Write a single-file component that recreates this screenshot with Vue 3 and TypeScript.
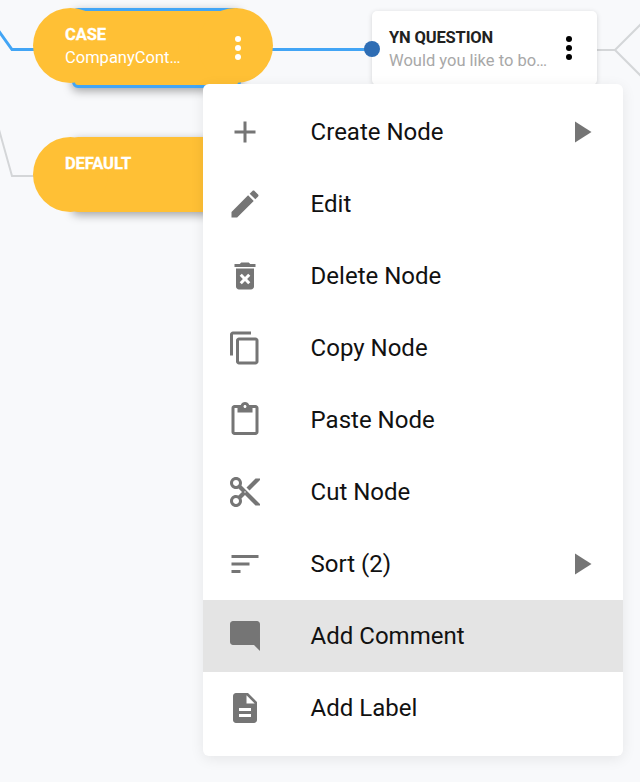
<template>
  <div class="canvas">
    <svg class="wires" width="640" height="782" viewBox="0 0 640 782">
      <polyline points="-2,30 12,49.5 40,49.5" class="wire active" />
      <polyline points="260,49.5 372,49.5" class="wire active" />
      <polyline points="-2,126 12,176 40,176" class="wire" />
      <polyline points="597,50 615,50 642,23" class="wire" />
      <polyline points="615,50 642,77" class="wire" />
    </svg>

    <div class="case-back selected"></div>
    <div class="case-node">
      <div class="case-text">
        <div class="case-title">CASE</div>
        <div class="case-sub">CompanyCont…</div>
      </div>
      <div class="dots light"><i></i><i></i><i></i></div>
    </div>

    <div class="case-back second"></div>
    <div class="case-node default">
      <div class="case-text">
        <div class="case-title">DEFAULT</div>
      </div>
    </div>

    <div class="question">
      <div class="question-text">
        <div class="question-title">YN QUESTION</div>
        <div class="question-sub">Would you like to bo…</div>
      </div>
      <div class="dots"><i></i><i></i><i></i></div>
    </div>
    <div class="port"></div>

    <ul class="menu">
      <li v-for="item in items" :key="item.label" class="menu-item" :class="{ hover: item.hover }">
        <svg class="icon" viewBox="0 0 24 24"><path :d="item.icon" /></svg>
        <span class="label">{{ item.label }}</span>
        <svg v-if="item.sub" class="icon arrow" viewBox="0 0 24 24"><path d="M8 5v14l11-7z" /></svg>
      </li>
    </ul>
  </div>
</template>

<script setup lang="ts">
interface MenuItem {
  label: string
  icon: string
  sub?: boolean
  hover?: boolean
}

const items: MenuItem[] = [
  { label: 'Create Node', sub: true, icon: 'M19 13h-6v6h-2v-6H5v-2h6V5h2v6h6v2z' },
  {
    label: 'Edit',
    icon: 'M3 17.25V21h3.75L17.81 9.94l-3.75-3.75L3 17.25zM20.71 7.04c.39-.39.39-1.02 0-1.41l-2.34-2.34c-.39-.39-1.02-.39-1.41 0l-1.83 1.83 3.75 3.75 1.83-1.83z'
  },
  {
    label: 'Delete Node',
    icon: 'M6 19c0 1.1.9 2 2 2h8c1.1 0 2-.9 2-2V7H6v12zm2.46-7.12l1.41-1.41L12 12.59l2.12-2.12 1.41 1.41L13.41 14l2.12 2.12-1.41 1.41L12 15.41l-2.12 2.12-1.41-1.41L10.59 14l-2.13-2.12zM15.5 4l-1-1h-5l-1 1H5v2h14V4z'
  },
  {
    label: 'Copy Node',
    icon: 'M16 1H4c-1.1 0-2 .9-2 2v14h2V3h12V1zm3 4H8c-1.1 0-2 .9-2 2v14c0 1.1.9 2 2 2h11c1.1 0 2-.9 2-2V7c0-1.1-.9-2-2-2zm0 16H8V7h11v14z'
  },
  {
    label: 'Paste Node',
    icon: 'M19 2h-4.18C14.4.84 13.3 0 12 0c-1.3 0-2.4.84-2.82 2H5c-1.1 0-2 .9-2 2v16c0 1.1.9 2 2 2h14c1.1 0 2-.9 2-2V4c0-1.1-.9-2-2-2zm-7 0c.55 0 1 .45 1 1s-.45 1-1 1-1-.45-1-1 .45-1 1-1zm7 18H5V4h2v3h10V4h2v16z'
  },
  {
    label: 'Cut Node',
    icon: 'M9.64 7.64c.23-.5.36-1.05.36-1.64 0-2.21-1.79-4-4-4S2 3.79 2 6s1.79 4 4 4c.59 0 1.14-.13 1.64-.36L10 12l-2.36 2.36C7.14 14.13 6.59 14 6 14c-2.21 0-4 1.79-4 4s1.79 4 4 4 4-1.79 4-4c0-.59-.13-1.14-.36-1.64L12 14l7 7h3v-1L9.64 7.64zM6 8c-1.1 0-2-.89-2-2s.9-2 2-2 2 .89 2 2-.9 2-2 2zm0 12c-1.1 0-2-.89-2-2s.9-2 2-2 2 .89 2 2-.9 2-2 2zm6-7.5c-.28 0-.5-.22-.5-.5s.22-.5.5-.5.5.22.5.5-.22.5-.5.5zM19 3l-6 6 2 2 7-7V3z'
  },
  { label: 'Sort (2)', sub: true, icon: 'M3 18h6v-2H3v2zM3 6v2h18V6H3zm0 7h12v-2H3v2z' },
  {
    label: 'Add Comment',
    hover: true,
    icon: 'M21.99 4c0-1.1-.89-2-1.99-2H4c-1.1 0-2 .9-2 2v12c0 1.1.9 2 2 2h14l4 4-.01-18z'
  },
  {
    label: 'Add Label',
    icon: 'M14 2H6c-1.1 0-1.99.9-1.99 2L4 20c0 1.1.89 2 1.99 2H18c1.1 0 2-.9 2-2V8l-6-6zm2 16H8v-2h8v2zm0-4H8v-2h8v2zm-3-5V3.5L18.5 9H13z'
  }
]
</script>

<style>
html,
body {
  margin: 0;
  background: #f8f9fb;
}
</style>

<style scoped>
.canvas {
  position: relative;
  width: 640px;
  height: 782px;
  overflow: hidden;
  background: #f8f9fb;
  font-family: Roboto, sans-serif;
}

.wires {
  position: absolute;
  left: 0;
  top: 0;
}

.wire {
  fill: none;
  stroke: #d4d6d8;
  stroke-width: 2;
}

.wire.active {
  stroke: #42a5f5;
  stroke-width: 3;
}

/* middle slab of the node, the round caps sit over it */
.case-back {
  position: absolute;
  left: 72px;
  top: 8px;
  width: 169px;
  height: 80px;
  box-sizing: border-box;
  border-radius: 6px;
  background: #ffc035;
  box-shadow: 0 3px 10px rgba(0, 0, 0, 0.35);
}

.case-back.selected {
  border: 3px solid #42a5f5;
}

.case-back.second {
  top: 137px;
  height: 75px;
}

.case-node {
  position: absolute;
  left: 33px;
  top: 8px;
  width: 240px;
  height: 75px;
  box-sizing: border-box;
  padding: 0 32px;
  color: #fff;
  display: flex;
  align-items: center;
  justify-content: space-between;
}

.case-node::before,
.case-node::after {
  content: '';
  position: absolute;
  top: 0;
  width: 75px;
  height: 75px;
  border-radius: 50%;
  background: #ffc035;
}

.case-node::before {
  left: 0;
}

.case-node::after {
  right: 0;
}

.case-node.default {
  top: 137px;
  align-items: flex-start;
}

.case-text,
.case-node .dots {
  position: relative;
  z-index: 1;
}

.default .case-text {
  padding-top: 15px;
}

.case-title {
  font-size: 16.5px;
  line-height: 23px;
  font-weight: 700;
  letter-spacing: -0.1px;
  -webkit-text-stroke: 0.3px #fff;
}

.case-sub {
  font-size: 16.5px;
  line-height: 23px;
}

.case-node .dots {
  margin-top: 5px;
}

.dots {
  display: flex;
  flex-direction: column;
  gap: 3px;
  width: 6px;
}

.dots i {
  width: 6px;
  height: 6px;
  border-radius: 50%;
  background: #000;
}

.dots.light i {
  background: #fff;
}

.question {
  position: absolute;
  left: 372px;
  top: 11px;
  width: 225px;
  height: 74px;
  box-sizing: border-box;
  padding: 0 25px 0 17px;
  border-radius: 5px;
  background: #fff;
  box-shadow: 0 1px 5px rgba(0, 0, 0, 0.15);
  display: flex;
  align-items: center;
  justify-content: space-between;
}

.question-text {
  padding-top: 2px;
}

.question-title {
  font-size: 16.5px;
  line-height: 23px;
  font-weight: 700;
  letter-spacing: -0.15px;
  color: #212121;
}

.question-sub {
  font-size: 16.5px;
  line-height: 23px;
  color: #a8a8a8;
}

.port {
  position: absolute;
  left: 364px;
  top: 41px;
  width: 16px;
  height: 16px;
  border-radius: 50%;
  background: #2e6db4;
}

.menu {
  position: absolute;
  left: 203px;
  top: 84px;
  width: 420px;
  margin: 0;
  padding: 12px 0;
  list-style: none;
  background: #fff;
  border-radius: 6px;
  box-shadow: 0 3px 14px rgba(0, 0, 0, 0.08);
}

.menu-item {
  height: 72px;
  padding: 0 24px;
  display: flex;
  align-items: center;
  color: #111;
}

.menu-item.hover {
  background: #e4e4e4;
}

.icon {
  width: 36px;
  height: 36px;
  flex: none;
  fill: #757575;
}

.label {
  margin-left: 47.6px;
  flex: 1;
  font-size: 24px;
  line-height: 36px;
}
</style>
